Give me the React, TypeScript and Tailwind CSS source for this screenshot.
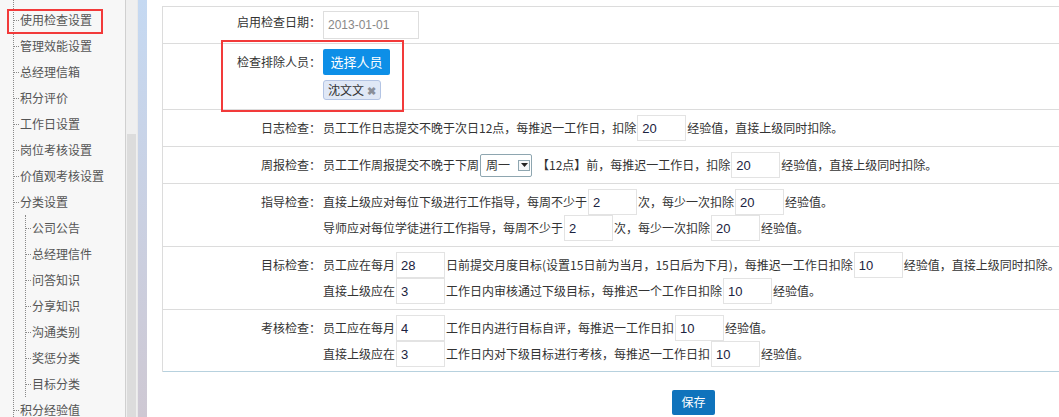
import type { ReactNode } from "react";

const cjk = { fontFamily: '"Noto Sans CJK SC", "Liberation Sans", sans-serif' };

const topItems = ["使用检查设置", "管理效能设置", "总经理信箱", "积分评价", "工作日设置", "岗位考核设置", "价值观考核设置", "分类设置"];
const subItems = ["公司公告", "总经理信件", "问答知识", "分享知识", "沟通类别", "奖惩分类", "目标分类"];

function TreeItem({ label }: { label: string }) {
  return (
    <div className="flex h-[26px] items-center">
      <span className="h-0 w-[5px] border-t border-dotted border-[#8a8a8a]" />
      <span className="whitespace-nowrap pl-[1px] text-[12px] text-[#555]">{label}</span>
    </div>
  );
}

function Sidebar() {
  return (
    <aside className="relative h-full w-[125px] shrink-0 bg-[#f7f7f7]" style={cjk}>
      <div className="ml-[13px] h-full border-l border-dotted border-[#8a8a8a] pt-[7px]">
        {topItems.map((t) => (
          <TreeItem key={t} label={t} />
        ))}
        <div className="ml-[11px] border-l border-dotted border-[#8a8a8a]">
          {subItems.map((t) => (
            <TreeItem key={t} label={t} />
          ))}
        </div>
        <TreeItem label="积分经验值" />
      </div>
      <div className="absolute left-[7px] top-[9px] h-[25px] w-[96px] border-2 border-[#f23a3a]" />
    </aside>
  );
}

function Num({ v }: { v: string }) {
  return (
    <input
      readOnly
      value={v}
      className="mx-[1px] h-[26px] w-[49px] shrink-0 border border-[#e3e3e3] bg-white px-[4px] text-[13px] text-[#1b2240] outline-none"
      style={{ fontFamily: '"Liberation Sans", Arial, sans-serif' }}
    />
  );
}

function Line({ children }: { children: ReactNode }) {
  return <div className="flex h-[26px] items-center whitespace-nowrap text-[12px] text-[#333]">{children}</div>;
}

function Row({ label, children, last, labelPad = "pt-[5px]", className = "" }: { label: string; children: ReactNode; last?: boolean; labelPad?: string; className?: string }) {
  return (
    <div className={`flex border-b ${last ? "border-[#b7d1de]" : "border-[#dcdcdc]"} ${className}`}>
      <div className={`w-[158px] shrink-0 text-right text-[12px] leading-[26px] text-[#333] ${labelPad}`}>{label}</div>
      <div className="pl-[2px]">{children}</div>
    </div>
  );
}

function WeekSelect() {
  return (
    <div className="mx-[1px] flex h-[23px] w-[52px] items-center rounded-[2px] border border-[#8ea6b0] pl-[5px]">
      <span className="text-[12px] text-[#333]">周一</span>
      <span className="ml-[8px] flex h-[11px] w-[12px] items-center justify-center border border-[#8ea6b0] bg-[#f4f7f9]">
        <svg width="7" height="4" viewBox="0 0 7 4">
          <path d="M0 0 H7 L3.5 4 Z" fill="#222" />
        </svg>
      </span>
    </div>
  );
}

export default function App() {
  return (
    <div className="flex h-[417px] w-[1059px] overflow-hidden bg-white" style={cjk}>
      <Sidebar />
      <div className="flex h-full w-[13px] shrink-0 flex-col border-l border-r border-[#d0d0d0] border-r-[#e9e9e9] bg-[#efefef]">
        <div className="h-[134px]" />
        <div className="mx-[1px] flex-1 bg-[#dcdcdc]" />
      </div>
      <div className="h-full w-[9px] shrink-0 bg-gradient-to-b from-[#c5d9f2] to-[#cec8d3]" />
      <main className="flex-1 pl-[15px] pt-[6px]">
        <div className="relative w-[900px] border-l border-t border-[#dcdcdc]">
          <Row label="启用检查日期：" labelPad="pt-[2px]" className="h-[37px]">
            <div className="pt-[4px]">
              <div
                className="flex h-[28px] w-[96px] items-center border border-[#dedede] px-[4px] text-[12px] text-[#888]"
                style={{ fontFamily: '"Liberation Sans", Arial, sans-serif' }}
              >
                2013-01-01
              </div>
            </div>
          </Row>
          <Row label="检查排除人员：" className="h-[66px]">
            <div className="flex flex-col items-start pt-[5px]">
              <button className="h-[26px] w-[67px] rounded-[2px] bg-[#0d8fe7] text-[13px] text-white">选择人员</button>
              <span className="mt-[5px] flex h-[20px] items-center rounded-[3px] border border-[#b3c4e4] bg-[#e0e8f6] pl-[4px] pr-[4px] text-[12px] text-[#333]">
                沈文文
                <span className="ml-[3px] text-[11px] font-bold text-[#8a8f99]">✖</span>
              </span>
            </div>
          </Row>
          <Row label="日志检查：" className="h-[37px]">
            <div className="pt-[5px]">
              <Line>
                员工工作日志提交不晚于次日12点，每推迟一工作日，扣除<Num v="20" />经验值，直接上级同时扣除。
              </Line>
            </div>
          </Row>
          <Row label="周报检查：" className="h-[37px]">
            <div className="pt-[5px]">
              <Line>
                员工工作周报提交不晚于下周<WeekSelect />
                <span className="ml-[4px]">【12点】前，每推迟一工作日，扣除</span>
                <Num v="20" />经验值，直接上级同时扣除。
              </Line>
            </div>
          </Row>
          <Row label="指导检查：" className="h-[63px]">
            <div className="pt-[5px]">
              <Line>
                直接上级应对每位下级进行工作指导，每周不少于<Num v="2" />次，每少一次扣除<Num v="20" />经验值。
              </Line>
              <Line>
                导师应对每位学徒进行工作指导，每周不少于<Num v="2" />次，每少一次扣除<Num v="20" />经验值。
              </Line>
            </div>
          </Row>
          <Row label="目标检查：" className="h-[63px]">
            <div className="pt-[5px]">
              <Line>
                员工应在每月<Num v="28" />日前提交月度目标(设置15日前为当月，15日后为下月)，每推迟一工作日扣除<Num v="10" />经验值，直接上级同时扣除。
              </Line>
              <Line>
                直接上级应在<Num v="3" />工作日内审核通过下级目标，每推迟一个工作日扣除<Num v="10" />经验值。
              </Line>
            </div>
          </Row>
          <Row label="考核检查：" last className="h-[62px]">
            <div className="pt-[5px]">
              <Line>
                员工应在每月<Num v="4" />工作日内进行目标自评，每推迟一工作日扣<Num v="10" />经验值。
              </Line>
              <Line>
                直接上级应在<Num v="3" />工作日内对下级目标进行考核，每推迟一工作日扣<Num v="10" />经验值。
              </Line>
            </div>
          </Row>
          <div className="absolute left-[58px] top-[33px] h-[72px] w-[183px] border-2 border-[#f23a3a]" />
        </div>
        <div className="pl-[510px] pt-[16px]">
          <button className="h-[25px] w-[43px] rounded-[2px] bg-[#0f73bc] text-[12px] text-white">保存</button>
        </div>
      </main>
    </div>
  );
}
